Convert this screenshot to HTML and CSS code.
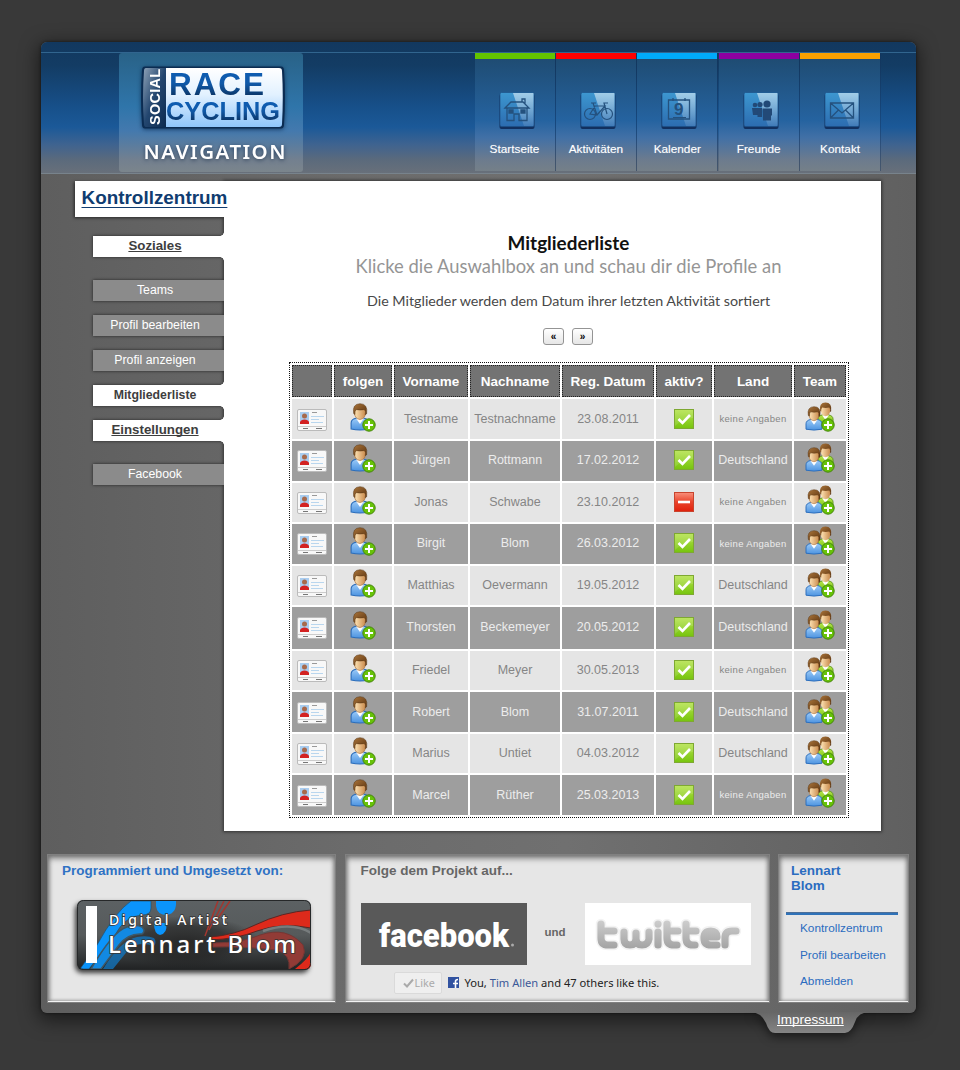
FILE: index.html
```html
<!DOCTYPE html>
<html lang="de">
<head>
<meta charset="utf-8">
<title>Mitgliederliste</title>
<link rel="stylesheet" href="styles.css">
</head>
<body>
<svg class="defs" width="0" height="0" aria-hidden="true">
  <defs>
    <linearGradient id="hair" x1="0" y1="0" x2="1" y2="1"><stop offset="0" stop-color="#a9743a"/><stop offset="1" stop-color="#5b330f"/></linearGradient>
    <linearGradient id="skin" x1="0" y1="0" x2="1" y2="0"><stop offset="0" stop-color="#ffe6b8"/><stop offset="1" stop-color="#c98a4c"/></linearGradient>
    <linearGradient id="blue" x1="0" y1="0" x2="0" y2="1"><stop offset="0" stop-color="#9ccbf8"/><stop offset="1" stop-color="#4c93e0"/></linearGradient>
    <linearGradient id="green" x1="0" y1="0" x2="0" y2="1"><stop offset="0" stop-color="#b5e34c"/><stop offset="1" stop-color="#76c40e"/></linearGradient>
    <linearGradient id="red" x1="0" y1="0" x2="0" y2="1"><stop offset="0" stop-color="#f9907c"/><stop offset=".5" stop-color="#e9432b"/><stop offset="1" stop-color="#e0200c"/></linearGradient>
    <linearGradient id="tile" x1="0" y1="0" x2="0" y2="1"><stop offset="0" stop-color="#3d97d0"/><stop offset="1" stop-color="#2c6cb0"/></linearGradient>
    <linearGradient id="gloss" x1="0" y1="0" x2="0" y2="1"><stop offset="0" stop-color="#fff" stop-opacity=".52"/><stop offset="1" stop-color="#fff" stop-opacity=".1"/></linearGradient>
    <linearGradient id="twit" gradientUnits="userSpaceOnUse" x1="0" y1="18" x2="0" y2="46"><stop offset="0" stop-color="#cdcdcd"/><stop offset="1" stop-color="#a3a3a3"/></linearGradient>
    <symbol id="card" viewBox="0 0 32 24">
      <rect x="1.5" y="1.5" width="29" height="21" rx="1.5" fill="#f8f8f8" stroke="#bbb"/>
      <rect x="4" y="4" width="9" height="12" fill="#a9cdf0"/>
      <circle cx="8.500" cy="8" r="2.500" fill="#a76a4c"/>
      <path d="M4 16v-2q1-2.500 4.500-2.500T13 14v2z" fill="#d32222"/>
      <path d="M16 4.500h5" stroke="#999"/><path d="M15 8.500h13M15 11.500h8M15 14.500h12" stroke="#b9d6ee"/>
      <path d="M2 18.500h28" stroke="#ccc"/><path d="M7 20.500h5M20 20.500h6" stroke="#777"/>
    </symbol>
    <symbol id="plus" viewBox="0 0 14 14">
      <circle cx="7" cy="7" r="6.200" fill="#67c208" stroke="#45850c"/>
      <path d="M7 3v8M3 7h8" stroke="#fff" stroke-width="2"/>
    </symbol>
    <symbol id="person" viewBox="0 0 18 28" preserveAspectRatio="none">
      <path d="M1 26v-6q0-4 5-5h6q5 1 5 5v6q-8 2-16 0z" fill="url(#blue)" stroke="#2b6dba"/>
      <path d="M5.500 15.500L9 21l3.500-5.500z" fill="#fff"/>
      <path d="M4 9q0-6 5-6t5 6q0 7-5 7.500Q4 16 4 9z" fill="url(#skin)" stroke="#a86a33" stroke-width=".6"/>
      <path d="M3.300 10.500Q1.800 1 9 .7q7.200 0 6 10l-1.200 1Q14.500 8 13 6.500 9 7.500 5.500 6.500 4.300 8 4.400 11.500z" fill="url(#hair)" stroke="#5a3512" stroke-width=".5"/>
    </symbol>
    <symbol id="person2" viewBox="0 0 18 28" preserveAspectRatio="none">
      <path d="M1 26v-6q0-4 5-5h6q5 1 5 5v6q-8 2-16 0z" fill="url(#green)" stroke="#5c9120"/>
      <path d="M5.500 15.500L9 21l3.500-5.500z" fill="#fff"/>
      <path d="M4 9q0-6 5-6t5 6q0 7-5 7.500Q4 16 4 9z" fill="url(#skin)"/>
      <path d="M3.300 10.500Q1.800 1 9 .7q7.200 0 6 10l-1.200 1Q14.500 8 13 6.500 9 7.500 5.500 6.500 4.300 8 4.400 11.500z" fill="url(#hair)"/>
    </symbol>
    <symbol id="follow" viewBox="0 0 28 32">
      <use href="#person" x="1" y="1" width="20" height="28"/><use href="#plus" x="13" y="16" width="14" height="14"/>
    </symbol>
    <symbol id="team" viewBox="0 0 32 32">
      <use href="#person2" x="13" y="0" width="17" height="24"/>
      <use href="#person" x="1" y="4" width="18" height="25"/><use href="#plus" x="17" y="16" width="14" height="14"/>
    </symbol>
    <symbol id="yes" viewBox="0 0 20 20">
      <rect x=".5" y=".5" width="19" height="19" fill="url(#green)" stroke="#7ea832"/><path d="M1 1h18v8Q10 9 1 17z" fill="#fff" opacity=".12"/>
      <path d="M4.500 10l4 4L16 6" fill="none" stroke="#fff" stroke-width="2.600"/>
    </symbol>
    <symbol id="no" viewBox="0 0 20 20">
      <rect x=".5" y=".5" width="19" height="19" fill="url(#red)" stroke="#c8442e"/><path d="M4 10h12" stroke="#fff" stroke-width="2.600"/>
    </symbol>
    <symbol id="tilebg" viewBox="0 0 38 40">
      <rect x="1.500" y="3" width="35" height="35" rx="2" fill="#12305f"/>
      <rect x="2" y="1.500" width="34" height="34" rx="1.500" fill="url(#tile)" stroke="#1c5288" stroke-width=".7"/>
      <path d="M15 2h20.500v33H26z" fill="url(#gloss)"/>
    </symbol>
  </defs>
</svg>

<div class="page">
  <header class="header">
    <a class="brand">
      <svg width="184" height="119" viewBox="0 0 184 119">
        <defs>
          <linearGradient id="plate" x1="0" y1="0" x2="0" y2="1"><stop offset="0" stop-color="#fff"/><stop offset=".45" stop-color="#e2f1ff"/><stop offset="1" stop-color="#8fc6fb"/></linearGradient>
          <linearGradient id="side" x1="0" y1="0" x2="1" y2="1"><stop offset="0" stop-color="#8fa3b8"/><stop offset=".5" stop-color="#23466f"/><stop offset="1" stop-color="#0c2b50"/></linearGradient>
          <linearGradient id="word" x1="0" y1="0" x2="0" y2="1"><stop offset="0" stop-color="#0c5fb8"/><stop offset=".5" stop-color="#1059a8"/><stop offset=".85" stop-color="#0b3566"/></linearGradient>
        </defs>
        <path d="M26 13.500H162q3 0 3 4 2 26 0 54 0 4-3 4H26q-3 0-3-4Q21 45 23 17.500q0-4 3-4z" fill="#0b2c52"/>
        <path d="M27 15H47V74H27q-2 0-2-3-2-26 0-53 0-3 2-3z" fill="url(#side)"/>
        <path d="M47 15H160q3 0 3 3 1.500 26 0 53 0 3-3 3H47z" fill="url(#plate)"/>
        <text class="logo" transform="translate(41 72) rotate(-90)" font-size="14.500" textLength="56" fill="#fff">SOCIAL</text>
        <text class="logo" x="50" y="41.500" font-size="31.500" textLength="95" fill="url(#word)">RACE</text>
        <text class="logo" x="47" y="67" font-size="25" textLength="114" lengthAdjust="spacingAndGlyphs" fill="url(#word)">CYCLING</text>
        <text class="navword" x="24.500" y="106" font-size="20.500" textLength="142" fill="#fff">NAVIGATION</text>
      </svg>
    </a>
    <nav class="topnav">
      <a class="tab green"><svg width="38" height="40"><use href="#tilebg"/><g fill="none" stroke="#24517e" stroke-width="1.300"><path d="M7 17L13 11H25L31 17zM9 17V29.500H16V23H21V29.500H29V17M24 11V8h3v5"/><path d="M11 19h4v3h-4zM23 19h4v3h-4z" fill="#24517e"/></g></svg><span>Startseite</span></a>
      <a class="tab red"><svg width="38" height="40"><use href="#tilebg"/><g fill="none" stroke="#24517e" stroke-width="1.200"><circle cx="11" cy="23" r="5.500"/><circle cx="28" cy="23" r="5.500"/><path d="M11 23l5-8h10l-8 9zM18 24l-4-12M12 12h5M28 23l-3-11h4"/></g></svg><span>Aktivitäten</span></a>
      <a class="tab cyan"><svg width="38" height="40"><use href="#tilebg"/><path d="M8.500 9h21v19h-21zM13 7v3M25 7v3" fill="none" stroke="#24517e" stroke-width="1.300"/><text class="logo" x="14" y="24" font-size="17" fill="#24517e">9</text><path d="M13 26.500h13" stroke="#24517e"/></svg><span>Kalender</span></a>
      <a class="tab purple"><svg width="38" height="40"><use href="#tilebg"/><g fill="#224977"><circle cx="13" cy="14" r="2.300"/><circle cx="18" cy="13.500" r="2.600"/><circle cx="25" cy="13" r="3.600"/><path d="M10 17h5.500v7H11zM15.500 17H20v9h-4.500zM20.500 17.500h9.500v7h-1v5h-8z"/></g></svg><span>Freunde</span></a>
      <a class="tab orange"><svg width="38" height="40"><use href="#tilebg"/><path d="M7.500 12h23v15h-23zM7.500 12L19 22 30.500 12M7.500 27l8-8M30.500 27l-8-8" fill="none" stroke="#24517e" stroke-width="1.300"/></svg><span>Kontakt</span></a>
    </nav>
  </header>

  <main class="main">
    <aside class="side">
      <h1 class="side-title">Kontrollzentrum</h1>
      <a class="item head open">Soziales</a>
      <a class="item">Teams</a>
      <a class="item">Profil bearbeiten</a>
      <a class="item">Profil anzeigen</a>
      <a class="item open">Mitgliederliste</a>
      <a class="item head open">Einstellungen</a>
      <a class="item">Facebook</a>
    </aside>
    <section class="content">
      <h2 class="title"><span>Mitgliederliste</span></h2>
      <p class="subtitle">Klicke die Auswahlbox an und schau dir die Profile an</p>
      <p class="note">Die Mitglieder werden dem Datum ihrer letzten Aktivität sortiert</p>
      <div class="pager"><button>«</button><button>»</button></div>
      <div class="table">
        <div class="row th"><b></b><b>folgen</b><b>Vorname</b><b>Nachname</b><b>Reg. Datum</b><b>aktiv?</b><b>Land</b><b>Team</b></div>
        <div class="row"><i><svg class="card"><use href="#card"/></svg></i><i><svg class="follow"><use href="#follow"/></svg></i><i>Testname</i><i>Testnachname</i><i>23.08.2011</i><i><svg class="state"><use href="#yes"/></svg></i><i class="none">keine Angaben</i><i><svg class="team"><use href="#team"/></svg></i></div>
        <div class="row alt"><i><svg class="card"><use href="#card"/></svg></i><i><svg class="follow"><use href="#follow"/></svg></i><i>Jürgen</i><i>Rottmann</i><i>17.02.2012</i><i><svg class="state"><use href="#yes"/></svg></i><i>Deutschland</i><i><svg class="team"><use href="#team"/></svg></i></div>
        <div class="row"><i><svg class="card"><use href="#card"/></svg></i><i><svg class="follow"><use href="#follow"/></svg></i><i>Jonas</i><i>Schwabe</i><i>23.10.2012</i><i><svg class="state"><use href="#no"/></svg></i><i class="none">keine Angaben</i><i><svg class="team"><use href="#team"/></svg></i></div>
        <div class="row alt"><i><svg class="card"><use href="#card"/></svg></i><i><svg class="follow"><use href="#follow"/></svg></i><i>Birgit</i><i>Blom</i><i>26.03.2012</i><i><svg class="state"><use href="#yes"/></svg></i><i class="none">keine Angaben</i><i><svg class="team"><use href="#team"/></svg></i></div>
        <div class="row"><i><svg class="card"><use href="#card"/></svg></i><i><svg class="follow"><use href="#follow"/></svg></i><i>Matthias</i><i>Oevermann</i><i>19.05.2012</i><i><svg class="state"><use href="#yes"/></svg></i><i>Deutschland</i><i><svg class="team"><use href="#team"/></svg></i></div>
        <div class="row alt tall"><i><svg class="card"><use href="#card"/></svg></i><i><svg class="follow"><use href="#follow"/></svg></i><i>Thorsten</i><i>Beckemeyer</i><i>20.05.2012</i><i><svg class="state"><use href="#yes"/></svg></i><i>Deutschland</i><i><svg class="team"><use href="#team"/></svg></i></div>
        <div class="row"><i><svg class="card"><use href="#card"/></svg></i><i><svg class="follow"><use href="#follow"/></svg></i><i>Friedel</i><i>Meyer</i><i>30.05.2013</i><i><svg class="state"><use href="#yes"/></svg></i><i class="none">keine Angaben</i><i><svg class="team"><use href="#team"/></svg></i></div>
        <div class="row alt"><i><svg class="card"><use href="#card"/></svg></i><i><svg class="follow"><use href="#follow"/></svg></i><i>Robert</i><i>Blom</i><i>31.07.2011</i><i><svg class="state"><use href="#yes"/></svg></i><i>Deutschland</i><i><svg class="team"><use href="#team"/></svg></i></div>
        <div class="row"><i><svg class="card"><use href="#card"/></svg></i><i><svg class="follow"><use href="#follow"/></svg></i><i>Marius</i><i>Untiet</i><i>04.03.2012</i><i><svg class="state"><use href="#yes"/></svg></i><i>Deutschland</i><i><svg class="team"><use href="#team"/></svg></i></div>
        <div class="row alt"><i><svg class="card"><use href="#card"/></svg></i><i><svg class="follow"><use href="#follow"/></svg></i><i>Marcel</i><i>Rüther</i><i>25.03.2013</i><i><svg class="state"><use href="#yes"/></svg></i><i class="none">keine Angaben</i><i><svg class="team"><use href="#team"/></svg></i></div>
      </div>
    </section>
  </main>

  <footer class="footer">
    <section class="panel by">
      <h3>Programmiert und Umgesetzt von:</h3>
      <svg class="artist" width="234" height="70" viewBox="0 0 234 70">
        <defs>
          <linearGradient id="plateDark" x1="0" y1="0" x2="0" y2="1"><stop offset="0" stop-color="#5c6163"/><stop offset=".5" stop-color="#565a5b"/><stop offset="1" stop-color="#202223"/></linearGradient>
          <radialGradient id="halo"><stop offset="0" stop-color="#222" stop-opacity=".85"/><stop offset=".6" stop-color="#222" stop-opacity=".6"/><stop offset="1" stop-color="#222" stop-opacity="0"/></radialGradient>
          <clipPath id="round"><rect width="234" height="70" rx="6"/></clipPath>
        </defs>
        <g clip-path="url(#round)">
          <rect width="234" height="70" fill="url(#plateDark)"/>
          <ellipse cx="108" cy="42" rx="75" ry="26" fill="url(#halo)"/>
          <path d="M20 45Q38 12 54 1H74V8Q74 15 65 15 48 16 38 35L12 69H3z" fill="#0b94fb" stroke="#23506f" stroke-width=".7"/>
          <path d="M14 69Q36 31 50 27 60 24 65 27 69 31 65 34 51 33 42 45L24 69z" fill="#1289e2" stroke="#3d5868" stroke-width="1.500"/>
          <path d="M26 69Q44 40 60 37 70 35 77 38 80 42 77 46 62 41 52 49L36 69z" fill="#1278c4" opacity=".75"/>
          <path d="M79 1H99q1 12-9 14-10 0-11-9zM77 23h12q2 10-6 12-6-1-6-12z" fill="#0b94fb"/>
          <path d="M133 37Q158 35 178 25 205 12 234 10V28Q205 22 180 31 160 39 133 40z" fill="#dd2a1b" stroke="#5c2623"/>
          <path d="M136 43Q165 43 183 35 210 26 226 45 232 59 212 69 214 54 199 50 164 46 136 47z" fill="#923b36" stroke="#753734"/>
          <path d="M218 69Q231 59 234 52V69z" fill="#dd2a1b"/>
          <path d="M141 1L128 36M147 1L132 30M153 1L137 24" fill="none" stroke="#a3362f" stroke-width="1.500"/>
          <path d="M186 31Q215 21 234 33" fill="none" stroke="#777c7d" stroke-width="2.500"/>
        </g>
        <rect x=".5" y=".5" width="233" height="69" rx="6" fill="none" stroke="#262829"/>
        <rect x="9" y="6" width="11" height="57" fill="#fff"/>
        <text class="script" x="32" y="25" font-size="14" textLength="118">Digital Artist</text>
        <text class="script" x="31" y="53" font-size="24" textLength="188">Lennart Blom</text>
      </svg>
    </section>
    <section class="panel social">
      <h3>Folge dem Projekt auf...</h3>
      <div class="brands">
        <svg width="166" height="62" viewBox="0 0 166 62"><rect width="166" height="62" fill="#595959"/><text class="fb" x="18" y="44" font-size="33" textLength="130" lengthAdjust="spacingAndGlyphs">facebook</text><circle cx="151.500" cy="42" r="1.500" fill="#aaa"/></svg>
        <span class="und">und</span>
        <svg width="166" height="62" viewBox="0 0 166 62"><rect width="166" height="62" fill="#fff"/>
          <g fill="none" stroke-linecap="round" stroke-linejoin="round">
            <path d="M16 21V35Q16 42 23 42H29M16 28H29M39 29V36Q39 42 45 42T51 36V30V36Q51 42 57 42T64 36V29M73 29V42M73 21V21.100M82 21V35Q82 42 89 42H92M82 28H93M101 21V35Q101 42 108 42H110M101 28H111M119 34H132Q132 28 126 28 119 28 119 35 119 42 126 42H132M140 42V35Q140 28 147 28H151" stroke="#f3f3f3" stroke-width="10.500"/>
            <path d="M16 21V35Q16 42 23 42H29M16 28H29M39 29V36Q39 42 45 42T51 36V30V36Q51 42 57 42T64 36V29M73 29V42M73 21V21.100M82 21V35Q82 42 89 42H92M82 28H93M101 21V35Q101 42 108 42H110M101 28H111M119 34H132Q132 28 126 28 119 28 119 35 119 42 126 42H132M140 42V35Q140 28 147 28H151" stroke="url(#twit)" stroke-width="7.200"/>
          </g></svg>
      </div>
      <div class="like">
        <span class="btn"><svg width="11" height="10"><path d="M1 5.500l3 3L10 1.500" fill="none" stroke="#aaa" stroke-width="2"/></svg>Like</span>
        <svg class="f" width="11" height="11"><rect width="11" height="11" fill="#3152a0"/><path d="M7.500 11V6.500M5 6.500h5M7.500 7V4.500Q7.500 2.500 10 2.500" fill="none" stroke="#fff" stroke-width="1.600"/></svg>
        <span class="liketext">You, <a>Tim Allen</a> and 47 others like this.</span>
      </div>
    </section>
    <section class="panel account">
      <h3>Lennart<br>Blom</h3>
      <div class="rule"></div>
      <a>Kontrollzentrum</a><a>Profil bearbeiten</a><a>Abmelden</a>
    </section>
  </footer>
  <div class="imprint">
    <svg width="120" height="24" viewBox="0 0 120 24"><defs><linearGradient id="tabg" x1="0" y1="0" x2="0" y2="1"><stop offset="0" stop-color="#666"/><stop offset="1" stop-color="#858585"/></linearGradient></defs><path d="M0 0H120Q108 0 105 10 101 21 95 21H25Q19 21 16 11 11 0 0 0z" fill="url(#tabg)"/></svg>
    <a>Impressum</a>
  </div>
</div>
</body>
</html>
```
FILE: styles.css
```css
* { box-sizing: border-box; }
body {
  margin: 0;
  height: 1070px;
  overflow: hidden;
  padding: 42px 0 0 41px;
  background: #393939;
  font-family: "Liberation Sans", Arial, sans-serif;
  font-size: 12px;
}
h1, h2, h3, p { margin: 0; }
svg { display: block; flex: none; overflow: visible; }
.defs { position: absolute; }
.page {
  position: relative;
  width: 875px;
  height: 971px;
  border-radius: 6px;
  background: linear-gradient(90deg, #5e5e5e 0, #6b6b6b 35%, #707070 60%, #606060 100%);
  box-shadow: 0 5px 18px 3px rgba(0, 0, 0, .5), 0 0 3px #1c1c1c;
}

.header {
  display: flex;
  justify-content: space-between;
  height: 132px;
  padding: 11px 35.5px 0 78px;
  border-radius: 6px 6px 0 0;
  border-bottom: 1px solid #78838c;
  background:
    linear-gradient(#31658f, #31658f) 0 10px / 100% 1px no-repeat,
    linear-gradient(#12385f 0, #133c64 18%, #17508a 50%, #1b5998 65%, #3e6390 78%, #5b6a7c 90%, #68707a 100%);
}
.brand {
  width: 184px;
  height: 119px;
  border-radius: 3px;
  background: linear-gradient(#296287, #2f75aa 45%, #4379ae 65%, #73808f 90%, #7b858c);
}
.brand svg { filter: drop-shadow(0 1px 2px rgba(0, 20, 50, .6)); }
.logo { font-family: "Liberation Sans", Arial, sans-serif; font-weight: bold; }
.navword { font-family: "Noto Sans", "Open Sans", sans-serif; font-weight: 600; }
.topnav { display: grid; grid-template-columns: repeat(5, 80px); gap: 1.4px; width: 406px; height: 118px; }
.tab {
  display: flex;
  flex-direction: column;
  align-items: center;
  padding-top: 32px;
  border-top: 6px solid;
  background: linear-gradient(#1f4c73, #2563a0 55%, #4170a6 70%, #6c7b8e 90%, #758088);
  box-shadow: 1px 0 0 rgba(20, 50, 90, .4);
  font-size: 11.8px;
}
.tab svg { margin-left: 4px; }
.tab span { margin-top: 10px; color: #fff; line-height: 16px; text-shadow: 0 0 1px rgba(255, 255, 255, .4); }
.green { border-top-color: #63c400; }
.red { border-top-color: #f00; }
.cyan { border-top-color: #00aaf9; }
.purple { border-top-color: #8d00a0; }
.orange { border-top-color: #f9a000; }

.main { display: grid; grid-template-columns: 183px 657px; height: 657px; padding-top: 7px; }
.side { position: relative; z-index: 1; display: flex; flex-direction: column; align-items: flex-end; }
.side-title {
  position: relative;
  width: 149px;
  height: 36px;
  padding-left: 6.5px;
  margin-bottom: 19px;
  color: #103c70;
  font-size: 18.9px;
  line-height: 33px;
  text-decoration: underline;
  text-decoration-thickness: 1px;
  text-underline-offset: 3px;
  text-decoration-skip-ink: none;
}
.side-title::before {
  content: "";
  position: absolute;
  z-index: -1;
  inset: 0;
  background: #fff;
  box-shadow: -1px 1px 3px rgba(0, 0, 0, .6);
  clip-path: inset(-5px 0 -5px -5px);
}
.item {
  position: relative;
  width: 131px;
  height: 21px;
  margin-bottom: 14px;
  padding-right: 7px;
  background: #8b8b8b;
  box-shadow: 0 0 3px rgba(0, 0, 0, .65);
  clip-path: inset(-4px 0 -4px -4px);
  color: #fff;
  font-size: 12.3px;
  line-height: 21px;
  text-align: center;
}
.item.open { background: #fff; color: #3e3e3e; font-weight: bold; font-size: 12.3px; }
.item.open::before, .item.open::after { content: ""; position: absolute; right: 0; width: 4px; height: 4px; }
.item.open::before { top: -4px; background: radial-gradient(circle at 0 0, transparent 3.5px, #fff 4px); }
.item.open::after { bottom: -4px; background: radial-gradient(circle at 0 100%, transparent 3.5px, #fff 4px); }
.item.head { margin-bottom: 23px; font-size: 13.3px; line-height: 20px; text-decoration: underline; text-decoration-skip-ink: none; }

.content {
  height: 650px;
  padding-top: 52px;
  background: #fff;
  box-shadow: 0 0 3px 1px rgba(0, 0, 0, .5);
  text-align: center;
}
.title { padding-left: 32px; color: #111; font: bold 18.9px/20px Lato, sans-serif; }
.subtitle { padding-left: 32px; margin-top: 2px; color: #959595; font: 400 18.4px/22px Lato, sans-serif; white-space: nowrap; }
.note { padding-left: 32px; margin-top: 15px; color: #484848; font: 14.3px/18px Lato, sans-serif; }
.pager { display: flex; justify-content: center; gap: 8px; margin-top: 18px; padding-left: 31px; }
.pager button {
  width: 21px;
  height: 17px;
  padding: 0;
  border: 1px solid #949494;
  border-radius: 3px;
  background: linear-gradient(#fff, #e6e6e6);
  font: bold 10px/14px "Liberation Sans", sans-serif;
}
.table {
  display: flex;
  flex-direction: column;
  gap: 2px;
  width: 560px;
  height: 456px;
  margin: 17px 0 0 65px;
  padding: 2px;
  border: 1px dotted #111;
}
.row { display: grid; grid-template-columns: 40px 58px 74px 90px 92px 56px 78px 52px; gap: 2px; height: 39.65px; }
.row.th { height: 32.500px; }
.row.tall { height: 41.500px; }
.row > * { display: flex; align-items: center; justify-content: center; font-style: normal; white-space: nowrap; }
.row b { border: 1px dotted #222; background: #737373; color: #fff; font-size: 13.500px; }
.row i { padding-bottom: 1px; background: #e5e5e5; color: #858585; font-size: 12.500px; }
.row.alt i { background: #9e9e9e; color: #ececec; }
.row i.none { font-size: 9.500px; letter-spacing: .33px; }
.card { width: 32px; height: 24px; margin-top: 2px; }
.follow { width: 28px; height: 32px; margin-top: -2px; }
.team { width: 32px; height: 32px; margin-top: -2px; }
.state { width: 20px; height: 20px; }

.footer { display: grid; grid-template-columns: 287px 423px 129px; gap: 10.500px; padding: 24px 0 0 7px; }
.panel {
  height: 147px;
  background: #e6e6e6;
  box-shadow: inset 0 4px 6px -1px #707070, inset 2px 0 4px -1px #888, inset -2px 0 4px -1px #888, 0 0 0 1px #808080;
  border-bottom: 1px solid #f2f2f2;
}
.panel h3 { font-size: 13.500px; line-height: 15px; }
.by { padding: 8px 0 0 14px; color: #2f72c4; }
.artist { margin: 22px 0 0 15px; border-radius: 7px; box-shadow: -2px 3px 5px rgba(0, 0, 0, .75); }
.script { font-family: "Noto Sans", "Open Sans", sans-serif; font-weight: 500; fill: #fff; paint-order: stroke; stroke: #333; stroke-width: 1.5px; }
.social { padding: 8px 0 0 15px; color: #666; }
.brands { display: flex; align-items: center; margin-top: 25px; }
.und { width: 58px; padding-right: 1px; text-align: center; font-weight: bold; font-size: 11.500px; padding-bottom: 5px; }
.fb { font-family: Roboto, "Open Sans", sans-serif; font-weight: 900; fill: #fff; }
.like { display: flex; align-items: center; margin: 6px 0 0 33px; height: 23px; color: #333; font: 10.5px "Noto Sans", sans-serif; }
.btn { display: flex; align-items: center; gap: 1px; width: 48px; height: 22px; padding-left: 8px; border: 1px solid #dadada; border-radius: 2px; background: #efefef; color: #aaa; font-size: 10.8px; }
.f { margin: 0 6px; }
.liketext { font: 11.150px "Noto Sans", sans-serif; color: #222; white-space: nowrap; }
.liketext a { color: #3b5998; }
.account { padding: 8px 10px 0 7px; color: #2b6cc0; }
.account h3 { padding-left: 5px; }
.rule { height: 3px; margin: 19px 0 0; background: #2f72b8; border-top: 1px solid #4d6f98; }
.account a { display: block; padding-left: 14px; font-size: 11.800px; line-height: 26.500px; }

.imprint { position: absolute; left: 709px; top: 970px; width: 120px; height: 24px; }
.imprint svg { filter: drop-shadow(0 4px 5px rgba(0, 0, 0, .5)); clip-path: inset(0 -10px -12px -10px); }
.imprint a { position: absolute; left: 27px; top: 0; color: #fff; font-size: 13.500px; line-height: 16px; text-decoration: underline; text-decoration-skip-ink: none; }
```
